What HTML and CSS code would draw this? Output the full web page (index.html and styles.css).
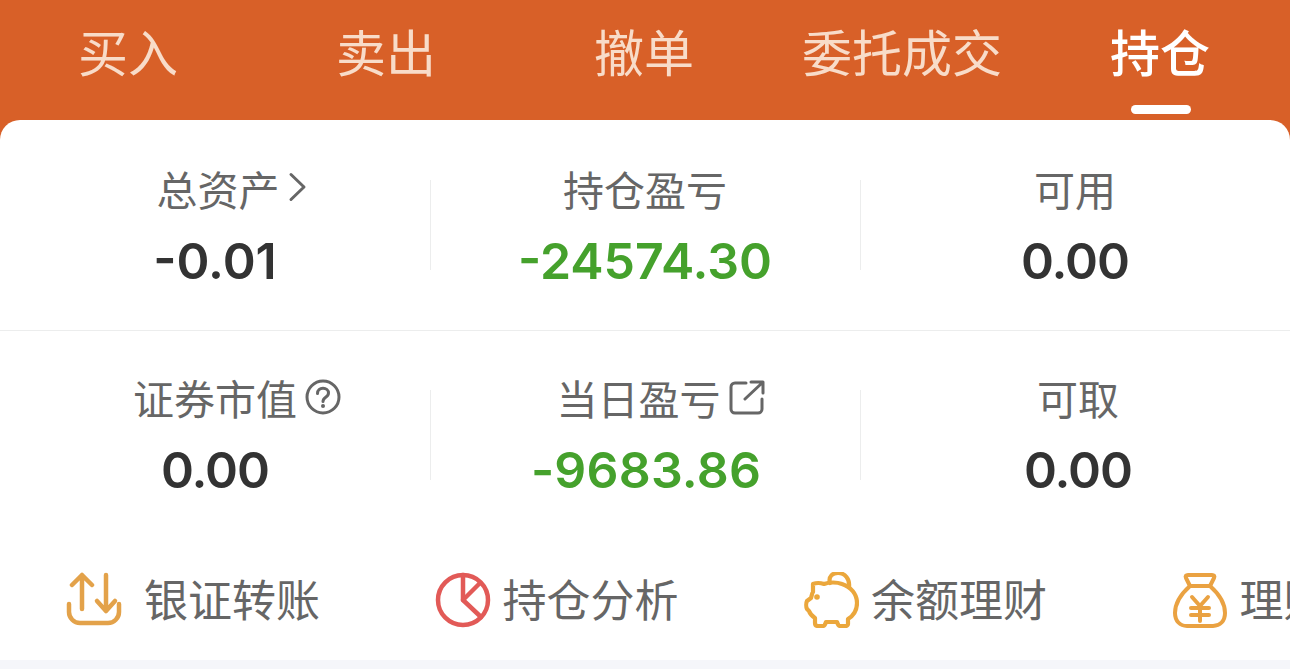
FILE: index.html
```html
<!DOCTYPE html>
<html lang="zh-CN">

<head>
    <meta charset="UTF-8">
    <meta name="viewport" content="width=device-width, initial-scale=1.0">
    <link rel="stylesheet" href="styles.css">
<title>持仓</title>
</head>
<body>
<div class="canvas">

    <div class="tabs">
        <div class="tab">买入</div>
        <div class="tab">卖出</div>
        <div class="tab">撤单</div>
        <div class="tab">委托成交</div>
        <div class="tab active">持仓</div>
    </div>

    <div class="card">
        <div class="statRow rowOne">
            <div class="stat">
                <div class="label shiftTotal"><span class="labelText">总资产<svg class="labelIcon chevron" width="20" height="30" viewBox="0 0 20 30"><path d="M3 2.500l13 12.500L3 27.500" fill="none" stroke="#666" stroke-width="3" stroke-linecap="round" stroke-linejoin="round"/></svg></span></div>
                <div class="value">-0.01</div>
            </div>
            <div class="stat">
                <div class="label"><span class="labelText">持仓盈亏</span></div>
                <div class="value green">-24574.30</div>
            </div>
            <div class="stat">
                <div class="label"><span class="labelText">可用</span></div>
                <div class="value tight">0.00</div>
            </div>
        </div>

        <div class="statRow rowTwo">
            <div class="stat">
                <div class="label"><span class="labelText">证券市值<svg class="labelIcon help" width="36" height="36" viewBox="0 0 36 36"><circle cx="18" cy="18" r="16" fill="none" stroke="#666" stroke-width="3"/><path d="M12.500 14.500c0-3.200 2.400-5.200 5.500-5.200s5.500 2 5.500 4.800c0 2-1 3-2.800 4.200-1.700 1.100-2.700 2-2.700 4.200" fill="none" stroke="#666" stroke-width="3" stroke-linecap="round"/><circle cx="18" cy="27" r="2" fill="#666"/></svg></span></div>
                <div class="value tight">0.00</div>
            </div>
            <div class="stat">
                <div class="label shiftTodayLabel"><span class="labelText">当日盈亏<svg class="labelIcon share" width="36" height="36" viewBox="0 0 36 36"><path d="M17 4H6a4 4 0 0 0-4 4v22a4 4 0 0 0 4 4h23a4 4 0 0 0 4-4V20" fill="none" stroke="#666" stroke-width="3" stroke-linecap="round"/><path d="M16 20L33 4M22 3h12v11" fill="none" stroke="#666" stroke-width="3" stroke-linecap="round" stroke-linejoin="round"/></svg></span></div>
                <div class="value green wide">-9683.86</div>
            </div>
            <div class="stat shiftTake">
                <div class="label"><span class="labelText">可取</span></div>
                <div class="value tight">0.00</div>
            </div>
        </div>

        <div class="shortcuts">
            <div class="shortcut first">
                <svg class="scIcon" width="56" height="56" viewBox="0 0 56 56"><g fill="none" stroke="#e3a24a" stroke-width="4.500" stroke-linecap="round" stroke-linejoin="round"><path d="M3 32v8a11 11 0 0 0 11 11h28a11 11 0 0 0 11-11v-8"/><path d="M16 37V3M6 13L16 3l10 10"/><path d="M40 3v36M31 29l9 10 9-10"/></g></svg>
                <span>银证转账</span>
            </div>
            <div class="shortcut">
                <svg class="scIcon" width="56" height="56" viewBox="0 0 56 56"><g fill="none" stroke="#e25a57" stroke-width="4.500" stroke-linejoin="round" stroke-linecap="round"><circle cx="28" cy="28" r="25"/><path d="M28 3v25l18 17"/><path d="M28 28L44 12"/></g></svg>
                <span>持仓分析</span>
            </div>
            <div class="shortcut">
                <svg class="scIcon" width="56" height="56" viewBox="0 0 56 56"><g fill="none" stroke="#eba73c" stroke-width="4.200" stroke-linejoin="round" stroke-linecap="round"><path d="M27 11c-2-7 3-10 8-10 7 0 12 6 11 14"/><path d="M10 12c5-2 8-1 11 0 5-2 13-2 18 0 9 3 15 10 15 19 0 8-4 13-9 16v5c0 1-1 2-2 2h-6c-1 0-2-1-3-4H23c-1 3-2 4-3 4h-5c-2 0-3-1-3-3v-5c-3-2-5-4-6-7l-2-2c-1-2-1-6 0-8l4-3c1-3 1-5 2-6z"/></g><circle cx="14" cy="25" r="2.800" fill="#eba73c"/></svg>
                <span>余额理财</span>
            </div>
            <div class="shortcut">
                <svg class="scIcon" width="56" height="56" viewBox="0 0 56 56"><g fill="none" stroke="#eaa242" stroke-width="4" stroke-linejoin="round" stroke-linecap="round"><path d="M16 3h24c2 0 3 1 2 3l-4 8H18l-4-8c-1-2 0-3 2-3z"/><path d="M18 14C9 22 3 31 3 41c0 8 5 13 12 13h26c7 0 12-5 12-13 0-10-6-19-15-27"/><path d="M20 25l8 9 8-9M19 36h18M19 43h18M28 34v15"/></g></svg>
                <span>理财</span>
            </div>
        </div>
    </div>

    <div class="footerStrip"></div>

</div><!--end of canvas div-->
</body>
</html>
```

FILE: styles.css
```css
html, body {
    margin: 0;
    padding: 0;
}
body {
    font-family: "Noto Sans CJK SC", "Noto Sans", sans-serif;
    background-color: #f5f6fa;
}
.canvas {
    width: 1290px;
    height: 669px;
    overflow: hidden;
    background-color: #d86028;
}

/* top tabs */
.tabs {
    display: flex;
    height: 120px;
}
.tab {
    position: relative;
    width: 258px;
    text-align: center;
    font-size: 50px;
    line-height: 100px;
    color: #f8dcc9;
    text-indent: -2px;
}
.tab.active {
    color: #fff;
    font-weight: 500;
}
.tab.active::after {
    content: "";
    position: absolute;
    left: 99px;
    top: 105px;
    width: 60px;
    height: 9px;
    border-radius: 5px;
    background-color: #fff;
}

/* white card */
.card {
    height: 540px;
    background-color: #fff;
    border-radius: 20px 20px 0 0;
}
.statRow {
    display: grid;
    grid-template-columns: 430px 430px 430px;
    box-sizing: border-box;
}
.rowOne {
    height: 211px;
    border-bottom: 1px solid #eceded;
}
.rowTwo {
    height: 209px;
}
.stat {
    position: relative;
    text-align: center;
    padding-top: 42px;
}
.rowTwo .stat {
    padding-top: 40px;
}
.stat + .stat::before {
    content: "";
    position: absolute;
    left: 0;
    top: 60px;
    width: 1px;
    height: 90px;
    background-color: #eceded;
}
.rowTwo .stat + .stat::before {
    top: 59px;
}
.label {
    height: 52px;
    line-height: 52px;
    font-size: 41px;
    color: #666;
}
.labelText {
    position: relative;
    display: inline-block;
}
.labelIcon {
    position: absolute;
    top: 8px;
}
.chevron {
    top: 10px;
    left: 131px;
}
.help {
    left: 172px;
}
.share {
    left: 172px;
}
.value {
    margin-top: 17px;
    font-family: "Inter", "Liberation Sans", sans-serif;
    font-size: 50px;
    line-height: 60px;
    font-weight: 600;
    color: #333;
}
.tight {
    letter-spacing: -1px;
}
.wide {
    letter-spacing: 0.2px;
    text-indent: 2px;
}
.green {
    color: #45a12c;
}
.shiftTotal {
    padding-left: 6px;
}
.shiftTodayLabel {
    margin-right: 13px;
}
.shiftTake {
    padding-left: 6px;
}

/* shortcuts row */
.shortcuts {
    display: flex;
    height: 120px;
    padding-left: 66px;
    white-space: nowrap;
}
.shortcut {
    flex: 0 0 368.500px;
    display: flex;
    align-items: center;
    height: 120px;
    font-size: 44px;
    color: #666;
}
.shortcut span {
    padding-bottom: 5px;
}
.scIcon {
    margin-right: 12px;
    flex: 0 0 auto;
}
.first .scIcon {
    margin-right: 22px;
}

.footerStrip {
    height: 9px;
    background-color: #f5f6fa;
}
```
